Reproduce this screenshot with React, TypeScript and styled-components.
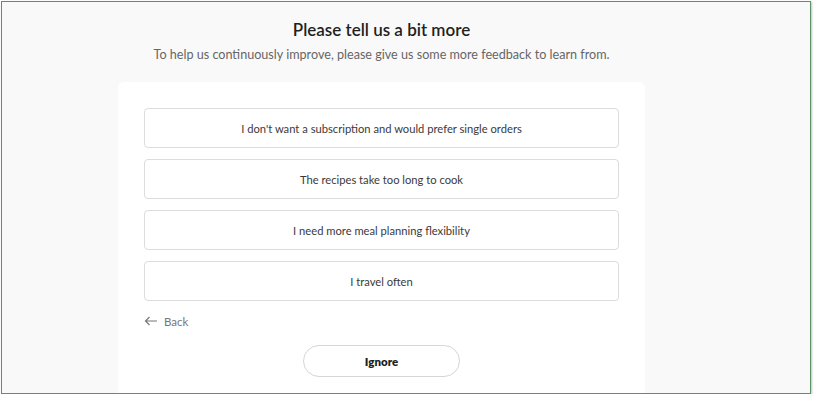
import styled, { createGlobalStyle } from "styled-components";

const GlobalStyle = createGlobalStyle`
  html, body {
    margin: 0;
    padding: 0;
    background: #ffffff;
  }
  body {
    font-family: "Lato", "Open Sans", sans-serif;
  }
`;

const options = [
  "I don't want a subscription and would prefer single orders",
  "The recipes take too long to cook",
  "I need more meal planning flexibility",
  "I travel often",
];

const Frame = styled.div`
  margin: 1px 0 0 1px;
  width: 808px;
  height: 391px;
  border: 1px solid #5a9466;
  background: #f9f9f9;
  box-shadow: 1px 1px 2px rgba(0, 0, 0, 0.25);
  overflow: hidden;
`;

const Column = styled.div`
  width: 527px;
  margin-left: 116px;
  display: flex;
  flex-direction: column;
  align-items: center;
`;

const Title = styled.h1`
  margin: 17px 0 0;
  font-size: 17px;
  font-weight: 600;
  color: #1f1f1f;
  line-height: 22px;
`;

const Subtitle = styled.p`
  margin: 5px 0 0;
  font-size: 12.6px;
  color: #666;
  line-height: 18px;
`;

const Card = styled.div`
  margin-top: 18px;
  width: 100%;
  background: #fff;
  border-radius: 6px;
  padding: 26px 26px 40px;
  box-sizing: border-box;
  display: flex;
  flex-direction: column;
  gap: 11px;
`;

const Option = styled.button`
  height: 40px;
  width: 100%;
  background: #fff;
  border: 1px solid #dcdcdc;
  border-radius: 4px;
  font-family: inherit;
  font-size: 11.2px;
  color: #3a3a3a;
  cursor: pointer;
`;

const BackLink = styled.div`
  margin-top: 0;
  display: flex;
  align-items: center;
  gap: 6px;
  font-size: 11.5px;
  color: #777;
  height: 18px;
`;

const IgnoreButton = styled.button`
  align-self: center;
  margin-top: 4px;
  width: 157px;
  height: 32px;
  border: 1px solid #d6d6d6;
  border-radius: 16px;
  background: #fff;
  font-family: inherit;
  font-size: 11.5px;
  font-weight: 800;
  color: #1f1f1f;
`;

export default function App() {
  return (
    <>
      <GlobalStyle />
      <Frame>
        <Column>
          <Title>Please tell us a bit more</Title>
          <Subtitle>
            To help us continuously improve, please give us some more feedback to learn from.
          </Subtitle>
          <Card>
            {options.map((o) => (
              <Option key={o}>{o}</Option>
            ))}
            <BackLink>
              <svg width="14" height="10" viewBox="0 0 14 10" fill="none" stroke="#777" strokeWidth="1.2">
                <path d="M13 5H1.5M5.5 1L1.5 5l4 4" />
              </svg>
              Back
            </BackLink>
            <IgnoreButton>Ignore</IgnoreButton>
          </Card>
        </Column>
      </Frame>
    </>
  );
}
